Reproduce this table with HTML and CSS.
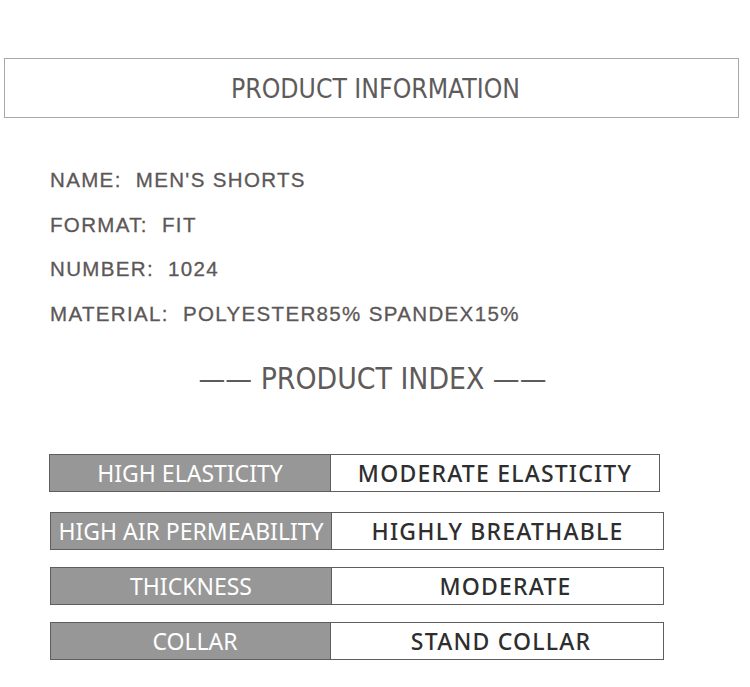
FILE: index.html
```html
<!DOCTYPE html>
<html>
<head>
<meta charset="utf-8">
<link rel="stylesheet" href="styles.css">
</head>
<body>
<div class="page">
  <div class="title-box">PRODUCT INFORMATION</div>
  <ul class="info">
    <li>NAME:&nbsp; MEN'S SHORTS</li>
    <li>FORMAT:&nbsp; FIT</li>
    <li>NUMBER:&nbsp; 1024</li>
    <li>MATERIAL:&nbsp; POLYESTER85% SPANDEX15%</li>
  </ul>
  <div class="index-title">—— PRODUCT INDEX ——</div>
  <div class="table">
    <div class="row r1"><div class="key">HIGH ELASTICITY</div><div class="val">MODERATE ELASTICITY</div></div>
    <div class="row r2"><div class="key">HIGH AIR PERMEABILITY</div><div class="val">HIGHLY BREATHABLE</div></div>
    <div class="row r3"><div class="key">THICKNESS</div><div class="val">MODERATE</div></div>
    <div class="row r4"><div class="key">COLLAR</div><div class="val">STAND COLLAR</div></div>
  </div>
</div>
</body>
</html>
```
FILE: styles.css
```css
html, body {
  margin: 0;
  padding: 0;
  background: #fff;
}
.page {
  width: 750px;
  height: 687px;
  overflow: hidden;
  padding-top: 58px;
  box-sizing: border-box;
}
.title-box {
  margin-left: 4px;
  width: 735px;
  height: 60px;
  box-sizing: border-box;
  border: 1px solid #a8a8a8;
  display: flex;
  align-items: center;
  justify-content: center;
  font-family: "DejaVu Sans Condensed", "Liberation Sans", sans-serif;
  font-stretch: condensed;
  font-size: 26.3px;
  color: #5f5b5b;
  padding-top: 1px;
  padding-left: 8px;
}
.info {
  list-style: none;
  margin: 50px 0 0 50px;
  padding: 0;
  font-family: "Liberation Sans", Arial, sans-serif;
  font-size: 20.5px;
  letter-spacing: 1.35px;
  color: #5c5757;
  -webkit-text-stroke: 0.3px #5c5757;
}
.info li {
  height: 44.5px;
  line-height: 24px;
}
.index-title {
  margin-top: 17px;
  text-align: center;
  margin-left: -5px;
  font-family: "DejaVu Sans Condensed", "Liberation Sans", sans-serif;
  font-stretch: condensed;
  font-size: 29.8px;
  color: #5f5b5b;
  line-height: 32px;
}
.table {
  margin-top: 59px;
  display: flex;
  flex-direction: column;
  gap: 17px;
  padding-left: 49px;
}
.row {
  display: flex;
  height: 38px;
  box-sizing: border-box;
  border: 1px solid #5e5e5e;
  width: 611px;
}
.r2, .r3, .r4 { width: 614px; margin-left: 1px; }
.r2 { margin-top: 3px; }
.key {
  width: 280px;
  flex: none;
  background: #979797;
  border-right: 1px solid #5e5e5e;
  color: #fff;
  display: flex;
  align-items: center;
  justify-content: center;
  font-family: "Noto Sans", sans-serif;
  font-weight: 400;
  font-size: 23px;
}
.val {
  flex: 1;
  display: flex;
  align-items: center;
  justify-content: center;
  font-family: "Noto Sans", sans-serif;
  font-weight: 500;
  font-size: 23px;
  letter-spacing: 1.2px;
  color: #2e2e2e;
}
.r3 .val { padding-left: 16px; }
.r4 .val { padding-left: 8px; }
.r4 .key { padding-left: 9px; box-sizing: border-box; }
```
